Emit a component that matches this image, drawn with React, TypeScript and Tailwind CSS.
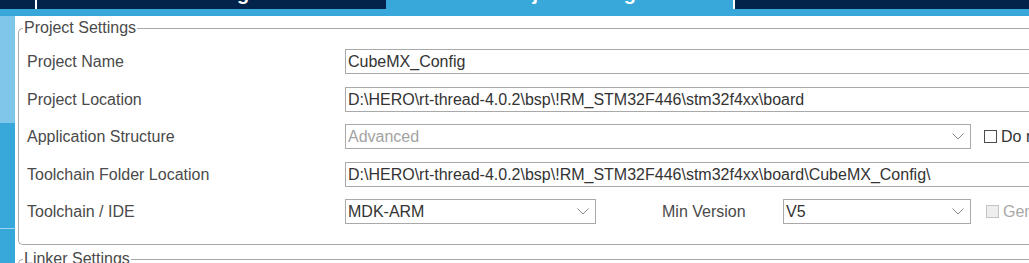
const Chevron = () => (
  <svg width="12" height="7" viewBox="0 0 12 7" className="shrink-0">
    <polyline points="0.5,0.5 6,6 11.5,0.5" fill="none" stroke="#8a8a8a" strokeWidth="1" />
  </svg>
);

const Row = ({ label, children, className = "" }: { label: string; children: React.ReactNode; className?: string }) => (
  <div className={`flex h-[25px] items-center whitespace-nowrap ${className}`}>
    <div className="w-[318px] shrink-0 text-[16px] text-[#4a4a4a]">{label}</div>
    {children}
  </div>
);

const TextBox = ({ value }: { value: string }) => (
  <div className="flex h-[25px] w-[800px] shrink-0 items-center border border-[#a9a9a9] bg-white pl-[2px] text-[16px] text-[#333]">
    {value}
  </div>
);

const Select = ({ value, width, disabled }: { value: string; width: string; disabled?: boolean }) => (
  <div
    className={`flex h-[25px] shrink-0 items-center justify-between border border-[#a9a9a9] bg-white pl-[2px] pr-[6px] text-[16px] ${width} ${
      disabled ? "text-[#a3a3a3]" : "text-[#333]"
    }`}
  >
    <span>{value}</span>
    <Chevron />
  </div>
);

const App = () => {
  return (
    <div className="h-[263px] w-[1029px] overflow-hidden bg-white font-['Liberation_Sans',Arial,sans-serif]">
      {/* tab bar, only the descenders of the labels are visible */}
      <div className="flex h-[9px] overflow-hidden bg-[#03234b] text-[20px] font-bold leading-[20px] text-white">
        <div className="w-[37px] border-r-2 border-white" />
        <div className="flex w-[349px] items-start justify-center">
          <span className="-mt-[17px] pl-[20px]">Clock Configuration</span>
        </div>
        <div className="flex w-[349px] items-start justify-center border-r-2 border-white bg-[#38a8db]">
          <span className="-mt-[17px] pl-[35px]">Project Manager</span>
        </div>
        <div className="flex-1" />
      </div>
      <div className="h-[7px] bg-[#38a8db]" />

      <div className="flex">
        {/* side tabs */}
        <div className="flex w-[15px] shrink-0 flex-col">
          <div className="h-[107px] bg-[#80c5ea]" />
          <div className="h-[105px] bg-[#38a8db]" />
          <div className="h-px bg-[#9fd3ef]" />
          <div className="h-[40px] bg-[#38a8db]" />
        </div>
        <div className="w-[3px] shrink-0 bg-white" />

        <div className="flex-1 overflow-hidden">
          <fieldset className="mt-[3px] w-[1100px] rounded-l-[5px] border border-r-0 border-[#a8a8a8] pb-[20px] pl-[8px]">
            <legend className="-ml-[4px] px-[1px] text-[16px] leading-[18px] text-[#4a4a4a]">Project Settings</legend>

            <Row label="Project Name" className="mt-[12px]">
              <TextBox value="CubeMX_Config" />
            </Row>
            <Row label="Project Location" className="mt-[13px]">
              <TextBox value="D:\HERO\rt-thread-4.0.2\bsp\!RM_STM32F446\stm32f4xx\board" />
            </Row>
            <Row label="Application Structure" className="mt-[12px]">
              <Select value="Advanced" width="w-[626px]" disabled />
              <div className="ml-[13px] h-[13px] w-[13px] shrink-0 border border-[#4d4d4d] bg-white" />
              <span className="ml-[4px] text-[16px] text-[#333]">Do not Generate the main()</span>
            </Row>
            <Row label="Toolchain Folder Location" className="mt-[13px]">
              <TextBox value="D:\HERO\rt-thread-4.0.2\bsp\!RM_STM32F446\stm32f4xx\board\CubeMX_Config\" />
            </Row>
            <Row label="Toolchain / IDE" className="mt-[12px]">
              <Select value="MDK-ARM" width="w-[251px]" />
              <span className="ml-[66px] w-[121px] shrink-0 text-[16px] text-[#4a4a4a]">Min Version</span>
              <Select value="V5" width="w-[188px]" />
              <div className="ml-[15px] h-[13px] w-[13px] shrink-0 border border-[#c4c4c4] bg-[#eeeeee]" />
              <span className="ml-[4px] text-[16px] text-[#a8a8a8]">Generate Under Root</span>
            </Row>
          </fieldset>

          <fieldset className="mt-[5px] h-[40px] w-[1100px] rounded-l-[5px] border border-r-0 border-[#a8a8a8] pl-[8px]">
            <legend className="-ml-[4px] px-[1px] text-[16px] leading-[18px] text-[#4a4a4a]">Linker Settings</legend>
          </fieldset>
        </div>
      </div>
    </div>
  );
};

export default App;
